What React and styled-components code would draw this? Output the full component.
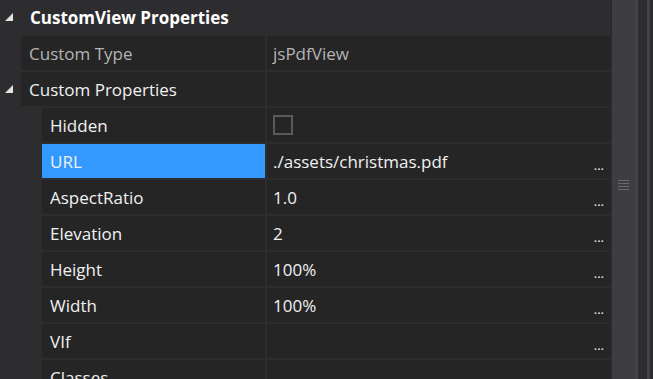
import React from "react";
import styled, { createGlobalStyle } from "styled-components";

const Global = createGlobalStyle`
  html, body { margin: 0; padding: 0; background: #2d2d30; overflow: hidden; }
  body { font-family: "Segoe UI", "Open Sans", "Noto Sans", sans-serif; }
`;

const Page = styled.div`
  width: 653px;
  height: 379px;
  display: flex;
  background: #2d2d30;
  overflow: hidden;
`;

const Grid = styled.div`
  width: 610px;
  display: flex;
  flex-direction: column;
  gap: 2px;
`;

const Header = styled.div`
  height: 34px;
  flex: none;
  display: flex;
  align-items: center;
  color: #ffffff;
  font-weight: 700;
  font-size: 17px;
`;

const Expander = styled.span`
  width: 30px;
  display: flex;
  justify-content: flex-start;
  padding-left: 5px;
  box-sizing: border-box;
  align-self: stretch;
  align-items: center;
`;

const Row = styled.div`
  height: 34px;
  flex: none;
  display: flex;
  padding-left: ${(p) => p.$indent}px;
  position: relative;
`;

const Gutter = styled.span`
  position: absolute;
  left: 5px;
  top: 0;
  height: 100%;
  display: flex;
  align-items: center;
`;

const NameCell = styled.div`
  width: ${(p) => 265 - p.$indent}px;
  flex: none;
  display: flex;
  align-items: center;
  padding-left: 8px;
  box-sizing: border-box;
  background: ${(p) => (p.$selected ? "#3399ff" : "#252526")};
  color: ${(p) => (p.$dim ? "#b4b4b4" : "#f1f1f1")};
  font-size: 17px;
  margin-right: 2px;
`;

const ValueCell = styled.div`
  flex: 1;
  display: flex;
  align-items: center;
  padding-left: 6px;
  box-sizing: border-box;
  background: #252526;
  color: ${(p) => (p.$dim ? "#b4b4b4" : "#f1f1f1")};
  font-size: 17px;
  position: relative;
`;

const Dots = styled.span`
  position: absolute;
  right: 6px;
  bottom: 4px;
  font-size: 13px;
  color: #f1f1f1;
`;

const Check = styled.span`
  width: 16px;
  height: 16px;
  border: 2px solid #5a5a5c;
  background: #252526;
`;

const Scroll = styled.div`
  flex: 1;
  display: flex;
`;

const Strip = styled.div`
  width: ${(p) => p.$w}px;
  background: ${(p) => p.$c};
`;

const Track = styled.div`
  width: 23px;
  background: #3e3e42;
  display: flex;
  flex-direction: column;
  align-items: center;
  padding-top: 180px;
  gap: 2px;
`;

const Grip = styled.div`
  width: 11px;
  height: 1px;
  background: #6a6a6e;
`;

const Tri = () => (
  <svg width="8" height="8" viewBox="0 0 8 8">
    <polygon points="8,0 8,8 0,8" fill="#e2e2e2" />
  </svg>
);

const props = [
  { name: "Hidden", check: true },
  { name: "URL", value: "./assets/christmas.pdf", selected: true, dots: true },
  { name: "AspectRatio", value: "1.0", dots: true },
  { name: "Elevation", value: "2", dots: true },
  { name: "Height", value: "100%", dots: true },
  { name: "Width", value: "100%", dots: true },
  { name: "VIf", value: "", dots: true },
  { name: "Classes", value: "" },
];

export default function App() {
  return (
    <Page>
      <Global />
      <Grid>
        <Header>
          <Expander>
            <Tri />
          </Expander>
          CustomView Properties
        </Header>
        <Row $indent={21}>
          <NameCell $indent={21} $dim>Custom Type</NameCell>
          <ValueCell $dim>jsPdfView</ValueCell>
        </Row>
        <Row $indent={21}>
          <Gutter>
            <Tri />
          </Gutter>
          <NameCell $indent={21}>Custom Properties</NameCell>
          <ValueCell />
        </Row>
        {props.map((p) => (
          <Row key={p.name} $indent={42}>
            <NameCell $indent={42} $selected={p.selected}>
              {p.name}
            </NameCell>
            <ValueCell>
              {p.check ? <Check /> : p.value}
              {p.dots && <Dots>...</Dots>}
            </ValueCell>
          </Row>
        ))}
      </Grid>
      <Scroll>
        <Strip $w={2} $c="#2a2a2c" />
        <Track>
          <Grip />
          <Grip />
          <Grip />
          <Grip />
        </Track>
        <Strip $w={3} $c="#434346" />
        <Strip $w={9} $c="#2d2d30" />
        <Strip $w={3} $c="#434346" />
        <Strip $w={3} $c="#2d2d30" />
      </Scroll>
    </Page>
  );
}
